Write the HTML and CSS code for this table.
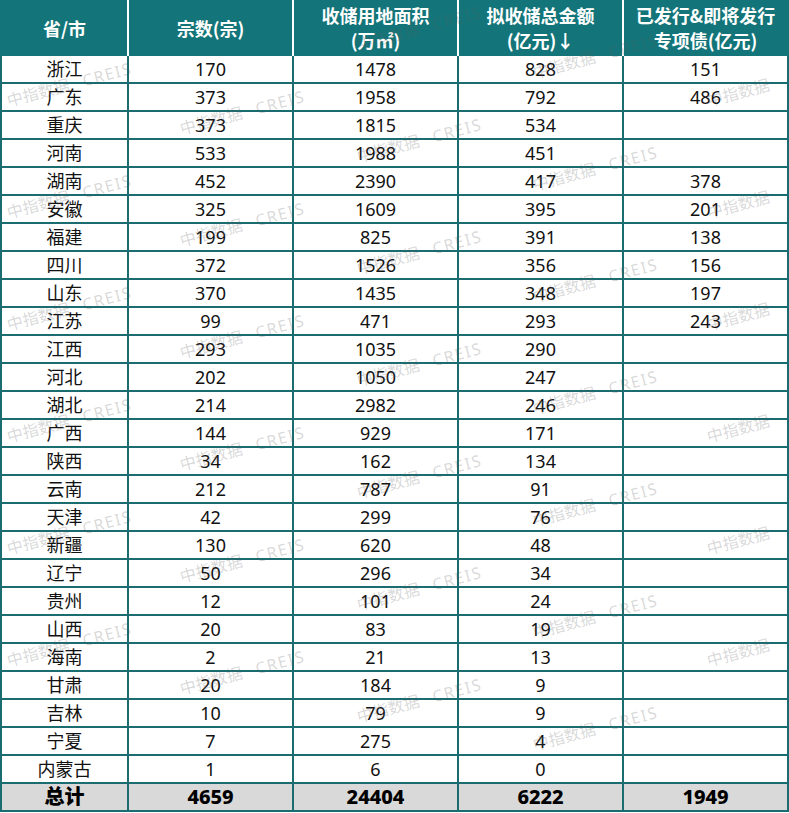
FILE: index.html
```html
<!DOCTYPE html>
<html lang="zh">
<head>
<meta charset="utf-8">
<title>专项债收储</title>
<link rel="stylesheet" href="styles.css">
</head>
<body>
<div class="sheet">
  <div class="head">
    <div class="hc">省/市</div>
    <div class="hc">宗数(宗)</div>
    <div class="hc">收储用地面积<br>(万㎡)</div>
    <div class="hc">拟收储总金额<br>(亿元)↓</div>
    <div class="hc">已发行&amp;即将发行<br>专项债(亿元)</div>
  </div>
  <div class="body">
    <div>浙江</div><div>170</div><div>1478</div><div>828</div><div>151</div>
    <div>广东</div><div>373</div><div>1958</div><div>792</div><div>486</div>
    <div>重庆</div><div>373</div><div>1815</div><div>534</div><div></div>
    <div>河南</div><div>533</div><div>1988</div><div>451</div><div></div>
    <div>湖南</div><div>452</div><div>2390</div><div>417</div><div>378</div>
    <div>安徽</div><div>325</div><div>1609</div><div>395</div><div>201</div>
    <div>福建</div><div>199</div><div>825</div><div>391</div><div>138</div>
    <div>四川</div><div>372</div><div>1526</div><div>356</div><div>156</div>
    <div>山东</div><div>370</div><div>1435</div><div>348</div><div>197</div>
    <div>江苏</div><div>99</div><div>471</div><div>293</div><div>243</div>
    <div>江西</div><div>293</div><div>1035</div><div>290</div><div></div>
    <div>河北</div><div>202</div><div>1050</div><div>247</div><div></div>
    <div>湖北</div><div>214</div><div>2982</div><div>246</div><div></div>
    <div>广西</div><div>144</div><div>929</div><div>171</div><div></div>
    <div>陕西</div><div>34</div><div>162</div><div>134</div><div></div>
    <div>云南</div><div>212</div><div>787</div><div>91</div><div></div>
    <div>天津</div><div>42</div><div>299</div><div>76</div><div></div>
    <div>新疆</div><div>130</div><div>620</div><div>48</div><div></div>
    <div>辽宁</div><div>50</div><div>296</div><div>34</div><div></div>
    <div>贵州</div><div>12</div><div>101</div><div>24</div><div></div>
    <div>山西</div><div>20</div><div>83</div><div>19</div><div></div>
    <div>海南</div><div>2</div><div>21</div><div>13</div><div></div>
    <div>甘肃</div><div>20</div><div>184</div><div>9</div><div></div>
    <div>吉林</div><div>10</div><div>79</div><div>9</div><div></div>
    <div>宁夏</div><div>7</div><div>275</div><div>4</div><div></div>
    <div>内蒙古</div><div>1</div><div>6</div><div>0</div><div></div>
    <div class="tot">总计</div><div class="tot">4659</div><div class="tot">24404</div><div class="tot">6222</div><div class="tot">1949</div>
  </div>

  <div class="wm-col wm-a">
    <span class="wm">中指数据<i>CREIS</i></span><span class="wm">中指数据<i>CREIS</i></span><span class="wm">中指数据<i>CREIS</i></span><span class="wm">中指数据<i>CREIS</i></span><span class="wm">中指数据<i>CREIS</i></span><span class="wm">中指数据<i>CREIS</i></span>
  </div>
  <div class="wm-col wm-b">
    <span class="wm">中指数据<i>CREIS</i></span><span class="wm">中指数据<i>CREIS</i></span><span class="wm">中指数据<i>CREIS</i></span><span class="wm">中指数据<i>CREIS</i></span><span class="wm">中指数据<i>CREIS</i></span><span class="wm">中指数据<i>CREIS</i></span>
  </div>
  <div class="wm-col wm-c">
    <span class="wm">中指数据<i>CREIS</i></span><span class="wm">中指数据<i>CREIS</i></span><span class="wm">中指数据<i>CREIS</i></span><span class="wm">中指数据<i>CREIS</i></span><span class="wm">中指数据<i>CREIS</i></span><span class="wm">中指数据<i>CREIS</i></span><span class="wm">中指数据<i>CREIS</i></span>
  </div>
  <div class="wm-col wm-d">
    <span class="wm">中指数据<i>CREIS</i></span><span class="wm">中指数据<i>CREIS</i></span><span class="wm">中指数据<i>CREIS</i></span><span class="wm">中指数据<i>CREIS</i></span><span class="wm">中指数据<i>CREIS</i></span><span class="wm">中指数据<i>CREIS</i></span><span class="wm">中指数据<i>CREIS</i></span>
  </div>
  <div class="wm-col wm-e">
    <span class="wm">中指数据</span><span class="wm">中指数据</span><span class="wm">中指数据</span><span class="wm">中指数据</span><span class="wm">中指数据</span><span class="wm">中指数据</span>
  </div>
</div>
</body>
</html>
```
FILE: styles.css
```css
html, body {
  margin: 0;
  padding: 0;
  background: #ffffff;
}

.sheet {
  position: relative;
  width: 789px;
  height: 813px;
  overflow: hidden;
  font-family: "Noto Sans", "Noto Sans CJK SC", sans-serif;
  color: #111;
}

.head {
  display: grid;
  grid-template-columns: 125px 163px 163px 163px 163px;
  column-gap: 2px;
  background: #ffffff;
  border-left: 2px solid #137579;
  border-right: 2px solid #137579;
  height: 56px;
}

.hc {
  background: #137579;
  color: #ffffff;
  font-family: "Noto Sans CJK SC", "Noto Sans", sans-serif;
  font-weight: 700;
  font-size: 18px;
  line-height: 25px;
  display: flex;
  align-items: center;
  justify-content: center;
  text-align: center;
}

.body {
  display: grid;
  grid-template-columns: 125px 163px 163px 163px 163px;
  grid-auto-rows: 26px;
  gap: 2px;
  background: #1b6c71;
  padding: 0 2px 2px 2px;
}

.body > div {
  background: #ffffff;
  font-size: 18px;
  line-height: 26px;
  text-align: center;
}

.body > div.tot {
  background: #d9d9d9;
  font-weight: 800;
  font-size: 20px;
  color: #000;
}

.wm-col {
  position: absolute;
  display: flex;
  flex-direction: column;
  gap: 90px;
  pointer-events: none;
}

.wm {
  display: block;
  height: 22px;
  line-height: 22px;
  white-space: nowrap;
  font-family: "Noto Sans CJK SC", sans-serif;
  font-size: 16px;
  color: rgba(90, 90, 90, 0.24);
  transform: rotate(-15deg);
  transform-origin: 0 50%;
}

.wm i {
  font-style: normal;
  font-family: "Noto Sans", sans-serif;
  font-size: 16px;
  letter-spacing: 1.5px;
  margin-left: 14px;
}

.wm-a { left: 7px; top: 89px; }
.wm-b { left: 180px; top: 117px; }
.wm-c { left: 357px; top: 33px; }
.wm-d { left: 533px; top: 61px; }
.wm-e { left: 707px; top: 89px; }
```
